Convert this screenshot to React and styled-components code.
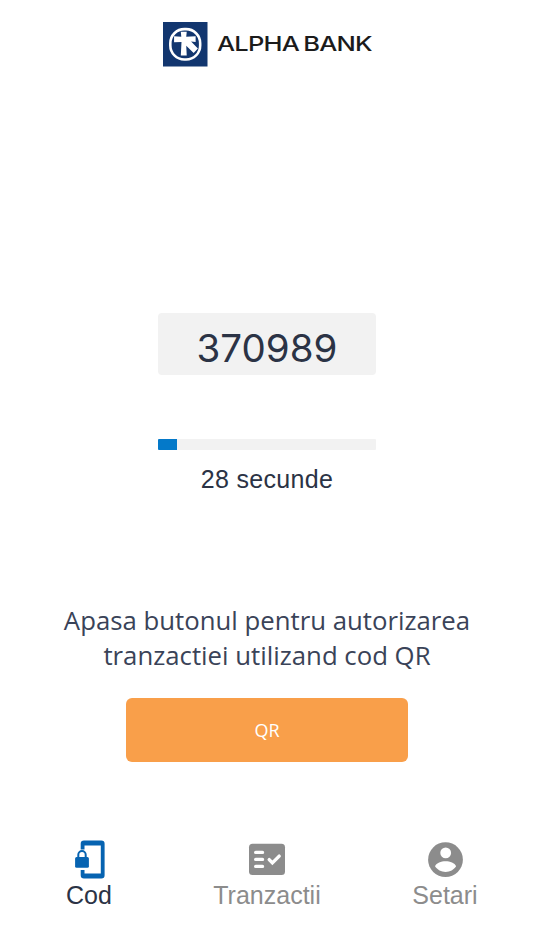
import React from 'react';
import styled, { createGlobalStyle } from 'styled-components';

const GlobalStyle = createGlobalStyle`
  * {
    box-sizing: border-box;
  }
  body {
    margin: 0;
    background-color: #fff;
    font-family: 'Liberation Sans', Arial, sans-serif;
  }
`;

const StyledScreen = styled.div`
  width: 534px;
  height: 950px;
  display: flex;
  flex-direction: column;
  align-items: center;
  overflow: hidden;
`;

const StyledHeader = styled.header`
  display: flex;
  align-items: center;
  gap: 9.5px;
  width: 208px;
  height: 45px;
  margin-top: 22px;
`;

const StyledBrand = styled.span`
  color: #1b1b1b;
  font-family: Inter, sans-serif;
  font-size: 20px;
  font-weight: 500;
  line-height: 45px;
  letter-spacing: -0.6px;
  word-spacing: -1.5px;
  white-space: nowrap;
  transform: scaleX(1.275);
  transform-origin: left center;
`;

const StyledCode = styled.div`
  width: 218.5px;
  height: 62px;
  margin-top: 246px;
  border-radius: 4px;
  background-color: #f2f2f2;
  color: #2b3345;
  font-family: Inter, sans-serif;
  font-size: 38.5px;
  line-height: 71px;
  text-align: center;
`;

const StyledTrack = styled.div`
  width: 218.5px;
  height: 11px;
  margin-top: 64px;
  border-radius: 1px;
  background-color: #f2f2f2;
  overflow: hidden;
`;

const StyledProgress = styled.div`
  height: 100%;
  background-color: #0479c9;
`;

const StyledSeconds = styled.p`
  margin: 11px 0 0;
  color: #2b3345;
  font-size: 25px;
  line-height: 36px;
  letter-spacing: 0.3px;
`;

const StyledMessage = styled.p`
  margin: 106px 0 0;
  color: #3a4358;
  font-family: 'Open Sans', sans-serif;
  font-size: 25.75px;
  line-height: 35px;
  text-align: center;
  white-space: nowrap;
`;

const StyledButton = styled.button`
  width: 281.5px;
  height: 64px;
  margin-top: 25px;
  padding: 0 0 1px;
  border: 0;
  border-radius: 6px;
  background-color: #f99f4a;
  color: #fff;
  font-family: 'Open Sans', sans-serif;
  font-size: 18px;
`;

const StyledNav = styled.nav`
  display: grid;
  grid-template-columns: repeat(3, 178px);
  margin-top: 77px;
`;

const StyledTab = styled.a`
  display: flex;
  flex-direction: column;
  align-items: center;
  color: ${({ $active }) => ($active ? '#2b3345' : '#8c8c8c')};
  font-size: 25px;
  line-height: 32px;
  white-space: nowrap;

  svg {
    display: block;
  }
`;

const Logo = () => (
  <svg width="44.5" height="44.5" viewBox="0 0 45 45">
    <rect width="45" height="45" fill="#12366f" />
    <rect x="7.4" y="7.2" width="30.2" height="30.8" rx="14.2" fill="none" stroke="#fff" strokeWidth="2.6" />
    <path
      d="M11.2 14.4l7.3.4-.5-5h6l-.5 5 9.500-.5v5.800l-4.600-.3 6.900 6.900-4.300 4.600-7.500-7.200.5 9.700h-6l.7-13.600-7.500.4z"
      fill="#fff"
    />
  </svg>
);

const CodeIcon = () => (
  <svg width="40" height="40" viewBox="0 0 40 40">
    <path
      d="M11.700 10.500V4.800a3.300 3.300 0 0 1 3.300-3.300h17.300a3.300 3.300 0 0 1 3.300 3.300v31.400a3.300 3.300 0 0 1-3.300 3.300H15a3.300 3.300 0 0 1-3.300-3.300V31h3.800v3.500h16.300V6.500H15.500v4z"
      fill="#0663b1"
    />
    <path d="M9.300 19v-3.300a3.700 3.700 0 0 1 7.400 0V19" fill="none" stroke="#0663b1" strokeWidth="2" />
    <rect x="6.100" y="18" width="13.800" height="10.800" rx="1.500" fill="#0663b1" />
  </svg>
);

const TransactionsIcon = () => (
  <svg width="40" height="40" viewBox="0 0 40 40">
    <rect x="2" y="4.700" width="36" height="31.300" rx="3.500" fill="#8c8c8c" />
    <path d="M8.700 13.400h6.800M8.700 20.400h6.800M8.700 27.400h6.800" stroke="#fff" strokeWidth="3.400" strokeLinecap="round" />
    <path
      d="M22.200 20.600l3.200 3.300 6.800-6.800"
      fill="none"
      stroke="#fff"
      strokeWidth="3.400"
      strokeLinecap="round"
    />
  </svg>
);

const SettingsIcon = () => (
  <svg width="40" height="40" viewBox="0 0 40 40">
    <circle cx="20.500" cy="20.700" r="17.400" fill="#8c8c8c" />
    <circle cx="20.700" cy="13.900" r="5.400" fill="#fff" />
    <path d="M10 27.300c1.500-3.300 6-5 10.600-5s9 1.700 10.500 5c-2.200 3.400-6.200 5.700-10.500 5.700S12.200 30.700 10 27.300z" fill="#fff" />
  </svg>
);

const tabs = [
  { title: 'Cod', Icon: CodeIcon, active: true },
  { title: 'Tranzactii', Icon: TransactionsIcon },
  { title: 'Setari', Icon: SettingsIcon },
];

const App = () => {
  const code = '370989';
  const seconds = 28;

  return (
    <>
      <GlobalStyle />
      <StyledScreen>
        <StyledHeader>
          <Logo />
          <StyledBrand>ALPHA BANK</StyledBrand>
        </StyledHeader>
        <StyledCode>{code}</StyledCode>
        <StyledTrack>
          <StyledProgress style={{ width: `${((30.8 - seconds) / 31) * 100}%` }} />
        </StyledTrack>
        <StyledSeconds>{seconds} secunde</StyledSeconds>
        <StyledMessage>
          Apasa butonul pentru autorizarea
          <br />
          tranzactiei utilizand cod QR
        </StyledMessage>
        <StyledButton>QR</StyledButton>
        <StyledNav>
          {tabs.map(({ title, Icon, active }) => (
            <StyledTab key={title} $active={active}>
              <Icon />
              {title}
            </StyledTab>
          ))}
        </StyledNav>
      </StyledScreen>
    </>
  );
};

export default App;
